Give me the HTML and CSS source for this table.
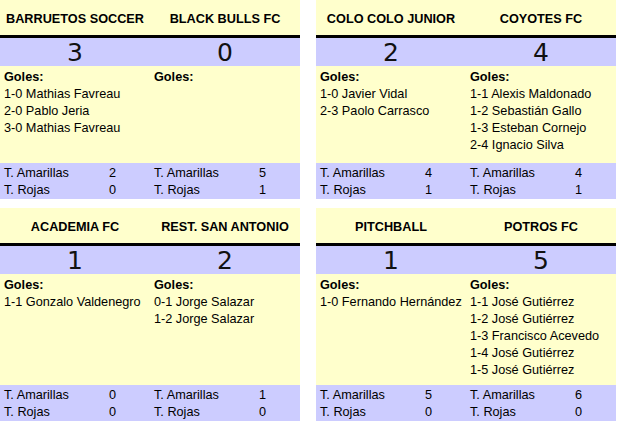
FILE: index.html
```html
<!DOCTYPE html>
<html lang="es">
<head>
<meta charset="utf-8">
<title>Resultados</title>
<link rel="stylesheet" href="styles.css">
</head>
<body>
<div class="board">
  <div class="match">
    <div class="teams"><div>BARRUETOS SOCCER</div><div>BLACK BULLS FC</div></div>
    <div class="scores"><div>3</div><div>0</div></div>
    <div class="goals">
      <div class="col"><div class="lbl">Goles:</div><div>1-0 Mathias Favreau</div><div>2-0 Pablo Jeria</div><div>3-0 Mathias Favreau</div></div>
      <div class="col"><div class="lbl">Goles:</div></div>
    </div>
    <div class="stats">
      <div class="half"><div class="row"><span class="name">T. Amarillas</span><span class="num">2</span></div><div class="row"><span class="name">T. Rojas</span><span class="num">0</span></div></div>
      <div class="half"><div class="row"><span class="name">T. Amarillas</span><span class="num">5</span></div><div class="row"><span class="name">T. Rojas</span><span class="num">1</span></div></div>
    </div>
  </div>
  <div class="match">
    <div class="teams"><div>COLO COLO JUNIOR</div><div>COYOTES FC</div></div>
    <div class="scores"><div>2</div><div>4</div></div>
    <div class="goals">
      <div class="col"><div class="lbl">Goles:</div><div>1-0 Javier Vidal</div><div>2-3 Paolo Carrasco</div></div>
      <div class="col"><div class="lbl">Goles:</div><div>1-1 Alexis Maldonado</div><div>1-2 Sebastián Gallo</div><div>1-3 Esteban Cornejo</div><div>2-4 Ignacio Silva</div></div>
    </div>
    <div class="stats">
      <div class="half"><div class="row"><span class="name">T. Amarillas</span><span class="num">4</span></div><div class="row"><span class="name">T. Rojas</span><span class="num">1</span></div></div>
      <div class="half"><div class="row"><span class="name">T. Amarillas</span><span class="num">4</span></div><div class="row"><span class="name">T. Rojas</span><span class="num">1</span></div></div>
    </div>
  </div>
  <div class="match">
    <div class="teams"><div>ACADEMIA FC</div><div>REST. SAN ANTONIO</div></div>
    <div class="scores"><div>1</div><div>2</div></div>
    <div class="goals">
      <div class="col"><div class="lbl">Goles:</div><div>1-1 Gonzalo Valdenegro</div></div>
      <div class="col"><div class="lbl">Goles:</div><div>0-1 Jorge Salazar</div><div>1-2 Jorge Salazar</div></div>
    </div>
    <div class="stats">
      <div class="half"><div class="row"><span class="name">T. Amarillas</span><span class="num">0</span></div><div class="row"><span class="name">T. Rojas</span><span class="num">0</span></div></div>
      <div class="half"><div class="row"><span class="name">T. Amarillas</span><span class="num">1</span></div><div class="row"><span class="name">T. Rojas</span><span class="num">0</span></div></div>
    </div>
  </div>
  <div class="match">
    <div class="teams"><div>PITCHBALL</div><div>POTROS FC</div></div>
    <div class="scores"><div>1</div><div>5</div></div>
    <div class="goals">
      <div class="col"><div class="lbl">Goles:</div><div>1-0 Fernando Hernández</div></div>
      <div class="col"><div class="lbl">Goles:</div><div>1-1 José Gutiérrez</div><div>1-2 José Gutiérrez</div><div>1-3 Francisco Acevedo</div><div>1-4 José Gutiérrez</div><div>1-5 José Gutiérrez</div></div>
    </div>
    <div class="stats">
      <div class="half"><div class="row"><span class="name">T. Amarillas</span><span class="num">5</span></div><div class="row"><span class="name">T. Rojas</span><span class="num">0</span></div></div>
      <div class="half"><div class="row"><span class="name">T. Amarillas</span><span class="num">6</span></div><div class="row"><span class="name">T. Rojas</span><span class="num">0</span></div></div>
    </div>
  </div>
</div>
</body>
</html>
```
FILE: styles.css
```css
html, body {
  margin: 0;
  padding: 0;
  background: #fff;
}
body {
  font-family: "Liberation Sans", Arial, sans-serif;
  font-size: 12.7px;
  color: #000;
}
.board {
  display: grid;
  grid-template-columns: 300px 300px;
  column-gap: 16px;
  row-gap: 9px;
}
.match {
  display: flex;
  flex-direction: column;
}
.teams {
  display: grid;
  grid-template-columns: 150px 150px;
  height: 33px;
  padding-top: 2px;
  background: #ffffcc;
  border-bottom: 3px solid #000;
  font-weight: bold;
  align-items: center;
  text-align: center;
  box-sizing: content-box;
}
.teams div { white-space: nowrap; }
.scores {
  display: grid;
  grid-template-columns: 150px 150px;
  height: 27px;
  padding-top: 1px;
  background: #ccccff;
  align-items: center;
  text-align: center;
  font-family: "DejaVu Sans", Verdana, sans-serif;
  font-size: 25px;
  line-height: 27px;
  color: #111;
}
.goals {
  flex: 1;
  display: grid;
  grid-template-columns: 150px 150px;
  min-height: 97px;
  box-sizing: border-box;
  background: #ffffcc;
  padding: 3px 0 6px;
  line-height: 17px;
}
.col {
  padding-left: 4px;
  white-space: nowrap;
}
.lbl { font-weight: bold; }
.stats {
  display: grid;
  grid-template-columns: 150px 150px;
  height: 36px;
  box-sizing: border-box;
  padding-top: 2px;
  background: #ccccff;
}
.row {
  display: flex;
  height: 17px;
  line-height: 17px;
  padding-left: 4px;
}
.name { width: 96px; }
.num { width: 25px; text-align: center; }
```
